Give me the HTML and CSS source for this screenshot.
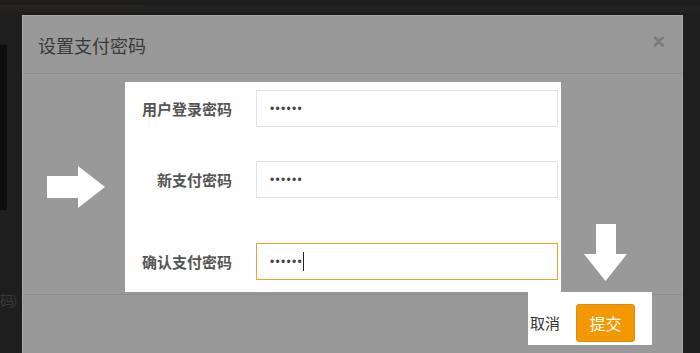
FILE: index.html
```html
<!DOCTYPE html>
<html lang="zh-CN">
<head>
    <meta charset="UTF-8">
    <meta name="viewport" content="width=device-width, initial-scale=1.0">
    <title>设置支付密码</title>
    <link rel="stylesheet" href="styles.css">
</head>
<body>
    <div class="page">
        <div class="topbar"><span class="topline"></span></div>
        <div class="side-img"></div>
        <p class="behind-text">码）</p>
    </div>

    <div class="modal">
        <div class="modal-header">
            <h3>设置支付密码</h3>
            <span class="close">×</span>
        </div>
        <div class="modal-body">
            <div class="hint-left">
                <svg width="58" height="42" viewBox="0 0 58 42"><path d="M0 10H31V0L58 21L31 42V32H0Z" fill="#fff"/></svg>
            </div>
            <form class="pay-form">
                <label>用户登录密码</label>
                <div class="field">••••••</div>

                <label>新支付密码</label>
                <div class="field">••••••</div>

                <label>确认支付密码</label>
                <div class="field active">••••••<span class="caret"></span></div>
            </form>
            <div class="hint-right">
                <svg width="43" height="57" viewBox="0 0 43 57"><path d="M12 0H32V30H43L21.5 57L0 30H12Z" fill="#fff"/></svg>
            </div>
        </div>
        <div class="modal-footer">
            <div class="actions">
                <a class="cancel">取消</a>
                <button type="button" class="submit">提交</button>
            </div>
        </div>
    </div>
</body>
</html>
```

FILE: styles.css
```css
body {
    margin: 0;
    background-color: #1e1e1e;
    font-family: "Noto Sans CJK SC", "Liberation Sans", sans-serif;
    height: 353px;
    overflow: hidden;
}
.page {
    position: relative;
    height: 353px;
}
.topbar {
    height: 7px;
    background-color: #222;
}
.topline {
    display: block;
    width: 140px;
    height: 2px;
    margin-top: 5px;
    background-color: #2c2319;
}
.side-img {
    width: 7px;
    height: 165px;
    margin-top: 33px;
    background-color: #0d0d0d;
}
.behind-text {
    margin: 80px 0 0 0;
    font-size: 14px;
    letter-spacing: -2px;
    color: #3a3a3a;
}
.modal {
    position: absolute;
    left: 22px;
    top: 15px;
    width: 661px;
    height: 338px;
    box-sizing: border-box;
    background-color: #999;
    border: 1px solid #a8a8a8;
    border-bottom: none;
    overflow: hidden;
}
.modal-header {
    height: 58px;
    box-sizing: border-box;
    border-bottom: 1px solid #8c8c8c;
    display: flex;
    align-items: center;
    justify-content: space-between;
    padding: 0 17px 0 15px;
}
.modal-header h3 {
    margin: 0;
    font-size: 18px;
    font-weight: normal;
    color: #3a3a3a;
}
.close {
    font-family: "Liberation Sans", sans-serif;
    font-size: 22px;
    font-weight: bold;
    color: #7a7a7a;
    margin-top: -6px;
}
.modal-body {
    display: flex;
    padding: 8px 0 2px;
}
.hint-left {
    width: 102px;
    display: flex;
    align-items: center;
    padding-left: 24px;
    box-sizing: border-box;
}
.hint-left svg, .hint-right svg {
    display: block;
}
.pay-form {
    width: 436px;
    height: 210px;
    box-sizing: border-box;
    margin: 0;
    padding: 8px 3px 12px 0;
    background-color: #fff;
    display: grid;
    grid-template-columns: 107px 302px;
    grid-template-rows: 37px 37px 37px;
    column-gap: 24px;
    row-gap: 34px;
    align-items: center;
}
.pay-form label {
    text-align: right;
    font-size: 15px;
    font-weight: bold;
    color: #555;
}
.pay-form label:nth-of-type(3) {
    margin-top: 21px;
}
.field {
    height: 37px;
    box-sizing: border-box;
    border: 1px solid #e2e2e2;
    padding-left: 13px;
    display: flex;
    align-items: center;
    font-family: "Liberation Sans", sans-serif;
    font-size: 12px;
    letter-spacing: 1.3px;
    color: #444;
}
.field.active {
    border-color: #f0a22a;
    margin-top: 22px;
}
.caret {
    display: inline-block;
    width: 1px;
    height: 19px;
    background-color: #222;
}
.hint-right {
    flex: 1;
    display: flex;
    align-items: flex-end;
    padding: 0 0 11px 23px;
}
.modal-footer {
    border-top: 1px solid #8c8c8c;
    display: flex;
    justify-content: flex-end;
    padding-right: 30px;
}
.actions {
    margin-top: -3px;
    width: 124px;
    height: 53px;
    box-sizing: border-box;
    background-color: #fff;
    display: flex;
    align-items: flex-start;
    padding: 12px 0 0 2px;
    gap: 16px;
}
.cancel {
    font-size: 15px;
    color: #333;
    line-height: 38px;
}
.submit {
    width: 59px;
    height: 38px;
    background-color: #f39800;
    color: white;
    border: 1px solid #d98b12;
    border-radius: 3px;
    font-family: "Noto Sans CJK SC", sans-serif;
    font-size: 16px;
    padding: 0;
    cursor: pointer;
}
```
